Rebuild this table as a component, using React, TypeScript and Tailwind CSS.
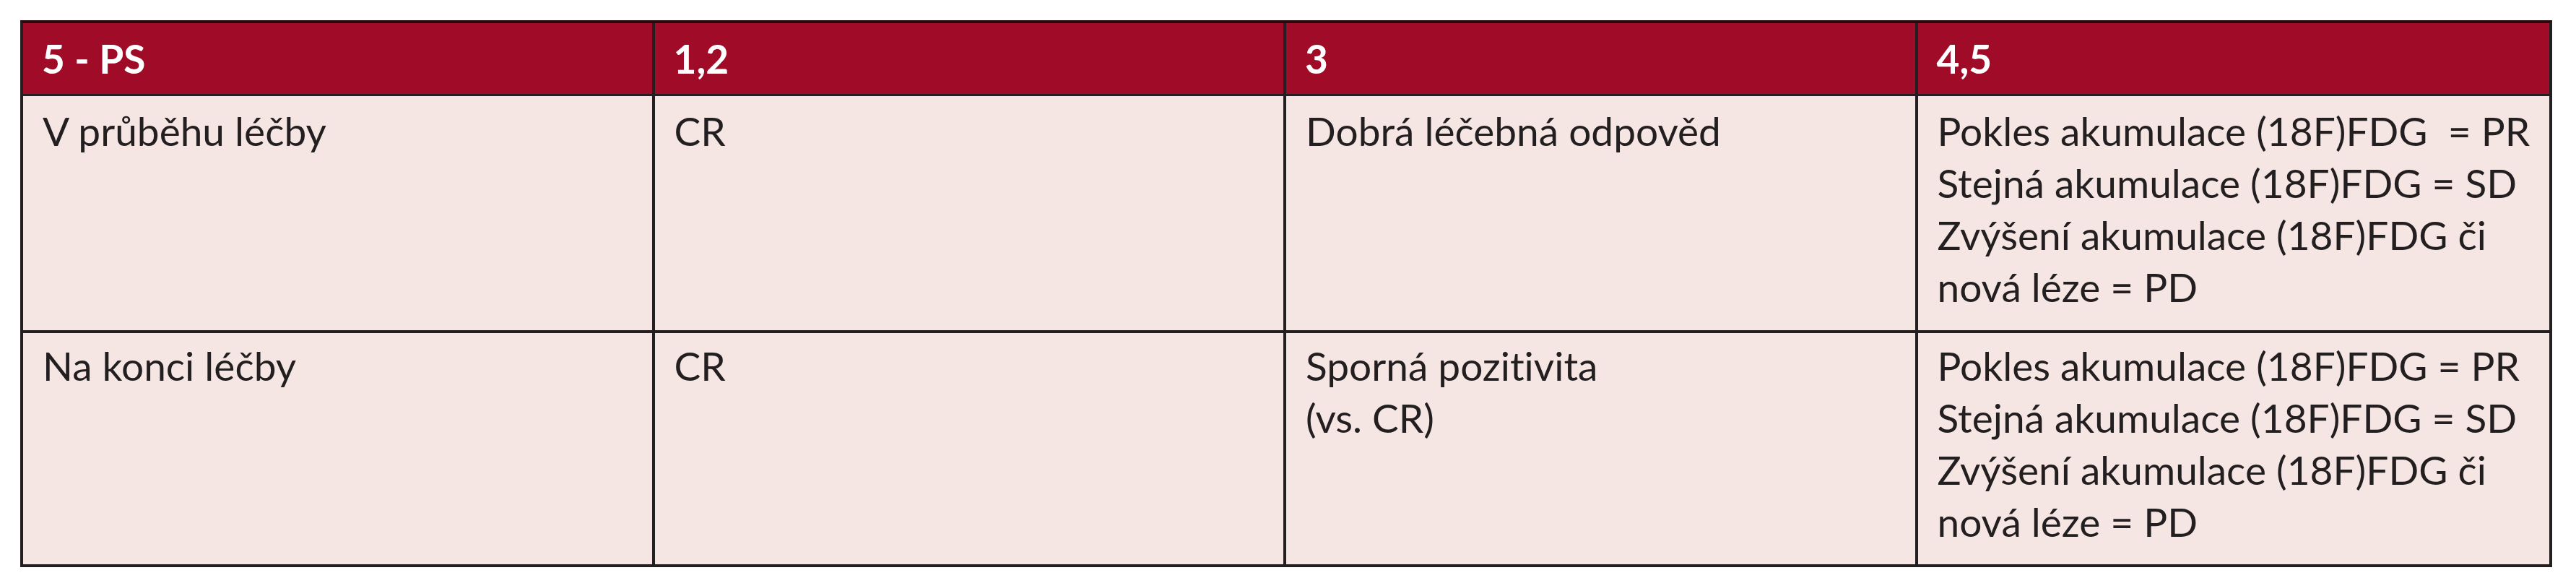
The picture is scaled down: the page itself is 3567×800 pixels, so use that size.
import React from 'react';

const headers = ['5 - PS', '1,2', '3', '4,5'];

const rows = [
  {
    cells: [
      ['V průběhu léčby'],
      ['CR'],
      ['Dobrá léčebná odpověd'],
      [
        'Pokles akumulace (18F)FDG\u00a0 = PR',
        'Stejná akumulace (18F)FDG = SD',
        'Zvýšení akumulace (18F)FDG či',
        'nová léze = PD',
      ],
    ],
    className: 'h-[324px] pt-3',
  },
  {
    cells: [
      ['Na konci léčby'],
      ['CR'],
      ['Sporná pozitivita', '(vs. CR)'],
      [
        'Pokles akumulace (18F)FDG = PR',
        'Stejná akumulace (18F)FDG = SD',
        'Zvýšení akumulace (18F)FDG či',
        'nová léze = PD',
      ],
    ],
    className: 'h-[320px] pt-[9px]',
  },
];

export default function App() {
  return (
    <div className="min-h-[800px] w-[3567px] bg-white pt-[28px] pl-[28px] font-['Lato','Liberation_Sans',sans-serif] text-[#231f20] [font-variant-ligatures:none]">
      <div className="w-[3506px] border-4 border-[#231f20] border-t-[#2a070b]">
        {/* header */}
        <div className="grid grid-cols-4 border-b-[3px] border-[#231f20] bg-[#a00c28]">
          {headers.map((h, i) => (
            <div
              key={h}
              className={`flex h-[98px] items-center pl-[26px] text-[55px] font-bold leading-none text-white ${
                i < 3 ? 'border-r-4 border-[#231f20]' : ''
              }`}
            >
              {h}
            </div>
          ))}
        </div>

        {rows.map((row, r) => (
          <div
            key={r}
            className={`grid grid-cols-4 bg-[#f5e6e3] ${r === 0 ? 'border-b-4 border-[#231f20]' : ''}`}
          >
            {row.cells.map((lines, i) => (
              <div
                key={i}
                className={`${row.className} pl-[27px] text-[55px] leading-[72px] ${
                  i < 3 ? 'border-r-4 border-[#231f20]' : ''
                }`}
              >
                {lines.map((l) => (
                  <div key={l} className="whitespace-nowrap">
                    {l}
                  </div>
                ))}
              </div>
            ))}
          </div>
        ))}
      </div>
    </div>
  );
}
